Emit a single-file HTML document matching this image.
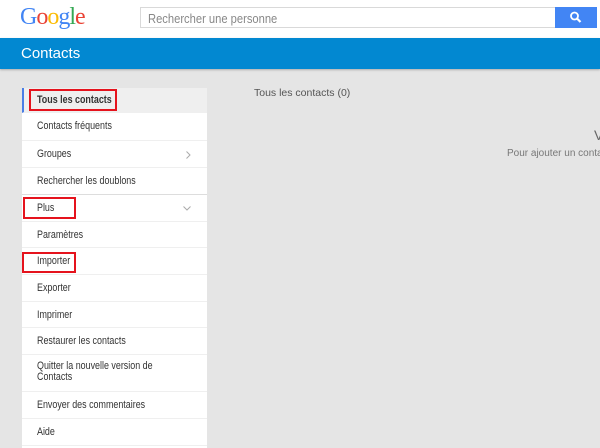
<!DOCTYPE html>
<html><head><meta charset="utf-8"><style>
*{margin:0;padding:0;box-sizing:border-box}
body{width:600px;height:445px;overflow:hidden;background:#e5e5e5;font-family:"Liberation Sans",Arial,sans-serif;position:relative}
.hdr{position:absolute;left:0;top:0;width:600px;height:38px;background:#fff}
.logo{position:absolute;left:20px;top:4px;font-family:"Liberation Serif",serif;font-size:24px;letter-spacing:-1px}
.search{position:absolute;left:140px;top:7px;width:416px;height:21px;border:1px solid #d9d9d9;border-right:none;font-size:13px;color:#888;padding:3px 0 0 7px}
.search span{display:inline-block;transform:scaleX(0.86);transform-origin:left}
.btn{position:absolute;left:555px;top:7px;width:42px;height:21px;background:#4285f4}
.bar{position:absolute;left:0;top:38px;width:600px;height:31px;background:#0288d1;box-shadow:0 1px 2px rgba(0,0,0,.25)}
.bar span{position:absolute;left:21px;top:7px;color:#fff;font-size:15px}
.side{position:absolute;left:22px;top:88px;width:185px;height:360px;background:#fff}
.row{position:absolute;left:0;width:185px;border-bottom:1px solid #efefef;font-size:11.3px;color:#333;padding-left:15px}
.row span{display:inline-block;transform:scaleX(0.79);transform-origin:left;white-space:nowrap}
.red{position:absolute;border:2px solid #e5131d}
.t{position:absolute;font-size:10.5px;color:#555}
</style></head><body>
<div class="hdr">
<div class="logo"><span style="color:#4285f4">G</span><span style="color:#ea4335">o</span><span style="color:#fbbc05">o</span><span style="color:#4285f4">g</span><span style="color:#34a853">l</span><span style="color:#ea4335">e</span></div>
<div class="search"><span>Rechercher une personne</span></div>
<div class="btn"><svg width="42" height="21" viewBox="0 0 42 21"><circle cx="19.5" cy="9" r="3.5" fill="none" stroke="#fff" stroke-width="1.8"/><path d="M22 11.5l3.5 3.5" stroke="#fff" stroke-width="2.2"/></svg></div>
</div>
<div class="bar"><span>Contacts</span></div>
<div class="side">
<div class="row" style="top:0;height:25px;background:#efefef;border-left:2px solid #4a7ee6;padding-top:6px;font-weight:bold;padding-left:13px"><span>Tous les contacts</span></div>
<div class="row" style="top:25px;height:28px;padding-top:7px"><span>Contacts fréquents</span></div>
<div class="row" style="top:53px;height:27px;padding-top:7px"><span>Groupes</span><svg style="position:absolute;right:16px;top:10px" width="5" height="8"><path d="M0.5 0.5l3.5 3.5-3.5 3.5" fill="none" stroke="#aaa"/></svg></div>
<div class="row" style="top:80px;height:27px;padding-top:7px;border-bottom-color:#ddd"><span>Rechercher les doublons</span></div>
<div class="row" style="top:107px;height:27px;padding-top:7px"><span>Plus</span><svg style="position:absolute;right:16px;top:11px" width="8" height="5"><path d="M0.5 0.5l3.5 3.5 3.5-3.5" fill="none" stroke="#aaa"/></svg></div>
<div class="row" style="top:134px;height:26px;padding-top:7px"><span>Paramètres</span></div>
<div class="row" style="top:160px;height:27px;padding-top:7px"><span>Importer</span></div>
<div class="row" style="top:187px;height:27px;padding-top:7px"><span>Exporter</span></div>
<div class="row" style="top:214px;height:26px;padding-top:7px"><span>Imprimer</span></div>
<div class="row" style="top:240px;height:27px;padding-top:7px"><span>Restaurer les contacts</span></div>
<div class="row" style="top:267px;height:37px;padding-top:6px;line-height:11px"><span>Quitter la nouvelle version de<br>Contacts</span></div>
<div class="row" style="top:304px;height:27px;padding-top:7px"><span>Envoyer des commentaires</span></div>
<div class="row" style="top:331px;height:27px;padding-top:7px"><span>Aide</span></div>
</div>
<div class="red" style="left:29px;top:89px;width:88px;height:22px"></div>
<div class="red" style="left:23px;top:197px;width:53px;height:22px"></div>
<div class="red" style="left:22px;top:252px;width:54px;height:21px"></div>
<div class="t" style="left:254px;top:87px">Tous les contacts (0)</div>
<div class="t" style="left:594px;top:127px;font-size:14px;color:#666">V</div>
<div class="t" style="left:507px;top:148px;font-size:10px;color:#777;white-space:nowrap">Pour ajouter un contact,</div>
</body></html>
